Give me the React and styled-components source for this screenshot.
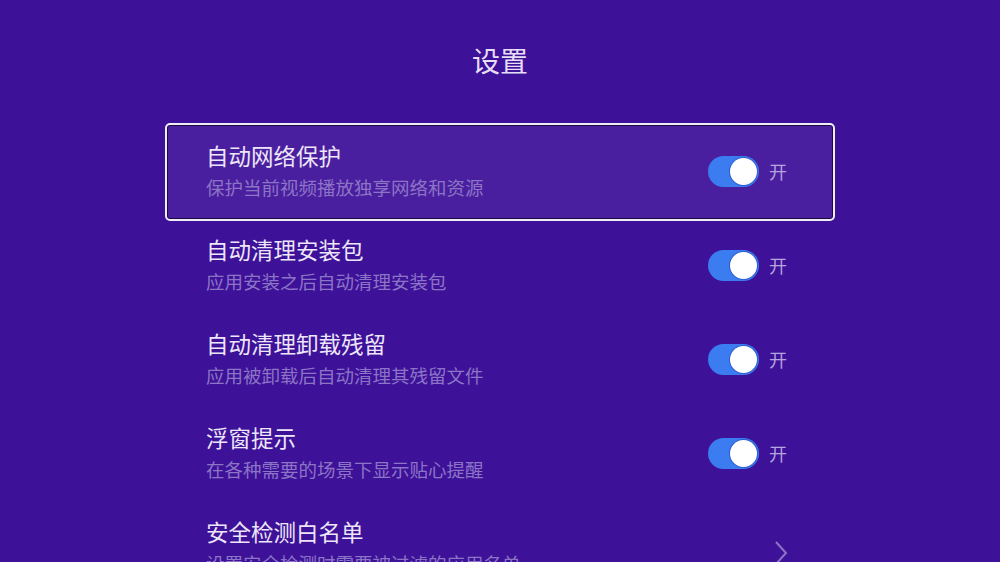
import React from 'react';
import styled, { createGlobalStyle } from 'styled-components';

const GlobalStyle = createGlobalStyle`
  html, body {
    margin: 0;
    padding: 0;
    background: #3d1198;
  }
  body {
    font-family: "Noto Sans CJK SC", "Noto Sans", sans-serif;
  }
`;

const Page = styled.div`
  width: 1000px;
  height: 562px;
  overflow: hidden;
  background: #3d1198;
  display: flex;
  flex-direction: column;
  align-items: center;
`;

const Title = styled.h1`
  flex-shrink: 0;
  margin: 0;
  padding-top: 40px;
  height: 125px;
  box-sizing: border-box;
  font-size: 28px;
  line-height: 40px;
  font-weight: 400;
  color: #e6def5;
`;

const List = styled.div`
  flex-shrink: 0;
  width: 666px;
  display: flex;
  flex-direction: column;
`;

const Row = styled.div`
  flex-shrink: 0;
  height: 94px;
  box-sizing: border-box;
  display: flex;
  align-items: center;
  justify-content: space-between;
  padding: 0 46px 0 39px;
  border-radius: 3px;
  background: ${p => (p.$focused ? '#4a1f9f' : 'transparent')};
  outline: ${p => (p.$focused ? '2px solid #f1ecfb' : 'none')};
  box-shadow: ${p => (p.$focused ? 'inset 0 0 0 1px #1c0a3d' : 'none')};
`;

const Texts = styled.div`
  display: flex;
  flex-direction: column;
  gap: 7px;
  margin-top: -4px;
`;

const Name = styled.div`
  font-size: 22.5px;
  line-height: 26px;
  color: #ece6f8;
`;

const Desc = styled.div`
  font-size: 18.5px;
  line-height: 24px;
  color: #8c74c6;
`;

const Control = styled.div`
  display: flex;
  align-items: center;
  gap: 10px;
  margin-top: -2px;
`;

const Track = styled.div`
  position: relative;
  width: 51px;
  height: 31px;
  border-radius: 16px;
  background: #3b7cf1;
`;

const Knob = styled.div`
  position: absolute;
  top: 2px;
  right: 2px;
  width: 27px;
  height: 27px;
  border-radius: 50%;
  background: #ffffff;
  box-shadow: 0 0 0 1px #2f5fd0;
`;

const State = styled.span`
  font-size: 18px;
  color: #b6a4de;
`;

const Chevron = styled.svg`
  width: 16px;
  height: 28px;
  margin-right: -2px;
  margin-top: 10px;
`;

const items = [
  { name: '自动网络保护', desc: '保护当前视频播放独享网络和资源', toggle: true },
  { name: '自动清理安装包', desc: '应用安装之后自动清理安装包', toggle: true },
  { name: '自动清理卸载残留', desc: '应用被卸载后自动清理其残留文件', toggle: true },
  { name: '浮窗提示', desc: '在各种需要的场景下显示贴心提醒', toggle: true },
  { name: '安全检测白名单', desc: '设置安全检测时需要被过滤的应用名单', toggle: false },
];

const App = () => (
  <Page>
    <GlobalStyle />
    <Title>设置</Title>
    <List>
      {items.map((it, i) => (
        <Row key={it.name} $focused={i === 0}>
          <Texts>
            <Name>{it.name}</Name>
            <Desc>{it.desc}</Desc>
          </Texts>
          {it.toggle ? (
            <Control>
              <Track>
                <Knob />
              </Track>
              <State>开</State>
            </Control>
          ) : (
            <Chevron viewBox="0 0 16 28">
              <path d="M3 3 L13 14 L3 25" fill="none" stroke="#8c74c6" strokeWidth="2" />
            </Chevron>
          )}
        </Row>
      ))}
    </List>
  </Page>
);

export default App;
